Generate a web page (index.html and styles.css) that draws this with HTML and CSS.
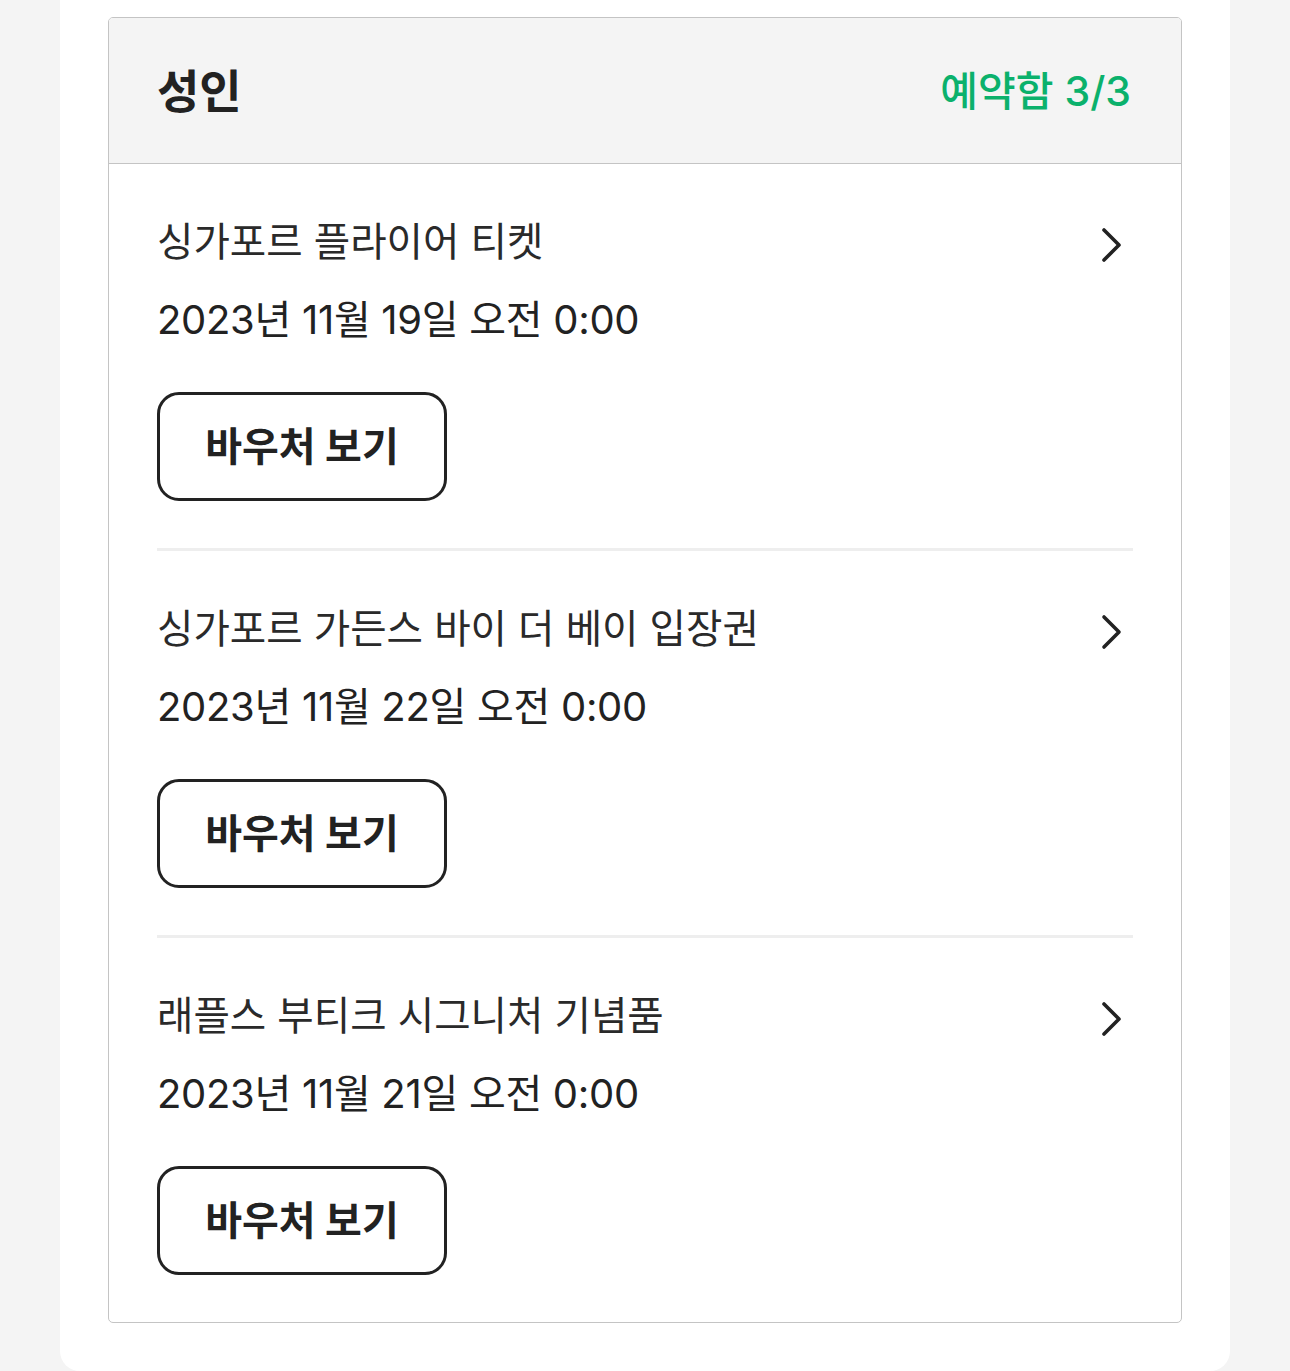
FILE: index.html
```html
<!DOCTYPE html>
<html lang="ko">
<head>
<meta charset="utf-8">
<link rel="stylesheet" href="styles.css">
</head>
<body>
<div class="card">
  <section class="box">
    <header class="box-head">
      <h2 class="box-title">성인</h2>
      <span class="box-status">예약함 3/3</span>
    </header>
    <div class="item">
      <div class="item-top">
        <div class="item-name">싱가포르 플라이어 티켓</div>
        <svg class="chev" viewBox="0 0 24 36" width="24" height="36"><path d="M4 3 L19 18 L4 33" fill="none" stroke="#222" stroke-width="3.6" stroke-linecap="round" stroke-linejoin="round"/></svg>
      </div>
      <div class="item-date">2023년 11월 19일 오전 0:00</div>
      <button class="voucher">바우처 보기</button>
    </div>
    <div class="item">
      <div class="item-top">
        <div class="item-name">싱가포르 가든스 바이 더 베이 입장권</div>
        <svg class="chev" viewBox="0 0 24 36" width="24" height="36"><path d="M4 3 L19 18 L4 33" fill="none" stroke="#222" stroke-width="3.6" stroke-linecap="round" stroke-linejoin="round"/></svg>
      </div>
      <div class="item-date">2023년 11월 22일 오전 0:00</div>
      <button class="voucher">바우처 보기</button>
    </div>
    <div class="item">
      <div class="item-top">
        <div class="item-name">래플스 부티크 시그니처 기념품</div>
        <svg class="chev" viewBox="0 0 24 36" width="24" height="36"><path d="M4 3 L19 18 L4 33" fill="none" stroke="#222" stroke-width="3.6" stroke-linecap="round" stroke-linejoin="round"/></svg>
      </div>
      <div class="item-date">2023년 11월 21일 오전 0:00</div>
      <button class="voucher">바우처 보기</button>
    </div>
  </section>
</div>
</body>
</html>
```

FILE: styles.css
```css
* { box-sizing: border-box; }
html, body { margin: 0; padding: 0; }
body {
  background: #f4f4f4;
  font-family: Inter, "Noto Sans CJK KR", sans-serif;
  color: #222;
}
.card {
  width: 1170px;
  margin: 0 auto;
  background: #fff;
  padding: 17px 48px 48px;
  border-radius: 0 0 20px 20px;
}
.box {
  border: 1.5px solid #c4c4c4;
  border-radius: 5px;
  overflow: hidden;
}
.box-head {
  height: 146px;
  background: #f4f4f4;
  border-bottom: 1.5px solid #c4c4c4;
  display: flex;
  align-items: center;
  justify-content: space-between;
  padding: 0 50px 6px 48px;
}
.box-title {
  margin: 0;
  font-size: 46px;
  font-weight: 700;
  color: #222;
}
.box-status {
  font-size: 41px;
  font-weight: 500;
  color: #0bb16c;
}
.item {
  margin: 0 48px;
  padding: 50px 0 47px;
  border-bottom: 3px solid #eeeeee;
}
.item:last-child { border-bottom: none; }
.item-top {
  display: flex;
  align-items: center;
  justify-content: space-between;
  height: 56px;
}
.item-name {
  font-size: 39.6px;
  line-height: 56px;
  color: #2a2a2a;
}
.chev { margin-right: 9px; margin-top: 6px; }
.item-date {
  margin-top: 22px;
  font-size: 40px;
  line-height: 56px;
  letter-spacing: -0.3px;
  color: #222;
}
.voucher {
  display: block;
  margin-top: 44px;
  width: 290px;
  height: 109px;
  border: 3px solid #222;
  border-radius: 22px;
  background: #fff;
  font-family: Inter, "Noto Sans CJK KR", sans-serif;
  font-size: 40px;
  font-weight: 700;
  color: #222;
  padding: 0 0 6px;
}
```
